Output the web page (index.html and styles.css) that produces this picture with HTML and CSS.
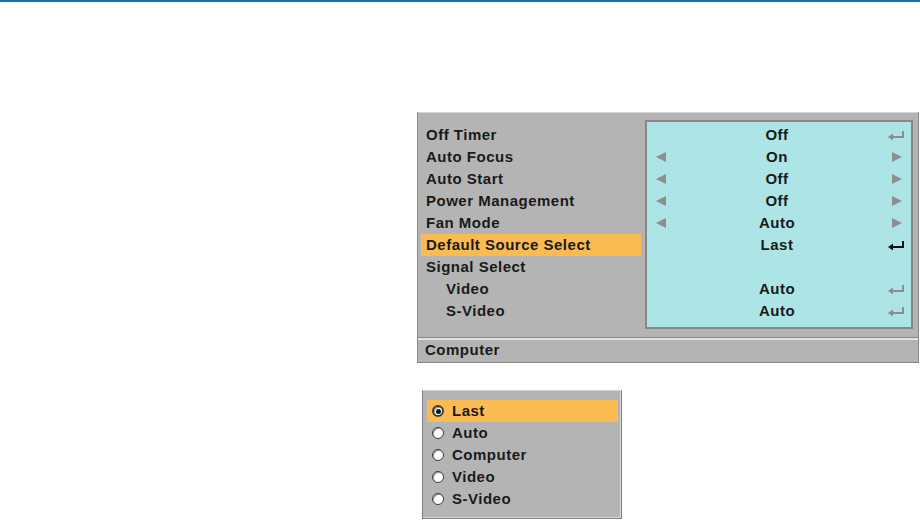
FILE: index.html
```html
<!DOCTYPE html>
<html>
	<head>
		<meta charset="UTF-8">
		<title>Default Source Select</title>
		<link rel="stylesheet" href="styles.css">
	</head>
	<body>
		<div class="topline"></div>
		<div class="page">
			<div class="panel">
				<div class="upper">
					<ul class="menu">
						<li>Off Timer</li>
						<li>Auto Focus</li>
						<li>Auto Start</li>
						<li>Power Management</li>
						<li>Fan Mode</li>
						<li class="active">Default Source Select</li>
						<li>Signal Select</li>
						<li class="sub">Video</li>
						<li class="sub">S-Video</li>
					</ul>
					<div class="values">
						<div class="row"><span></span><span class="val">Off</span><span><svg class="enter" viewBox="0 0 16 9"><path d="M15 0V6H4" fill="none" stroke="#8c8c8c" stroke-width="2"/><path d="M0 6L5 2.5V9.5Z" fill="#8c8c8c"/></svg></span></div>
						<div class="row"><span class="al"></span><span class="val">On</span><span class="ar"></span></div>
						<div class="row"><span class="al"></span><span class="val">Off</span><span class="ar"></span></div>
						<div class="row"><span class="al"></span><span class="val">Off</span><span class="ar"></span></div>
						<div class="row"><span class="al"></span><span class="val">Auto</span><span class="ar"></span></div>
						<div class="row"><span></span><span class="val">Last</span><span><svg class="enter" viewBox="0 0 16 9"><path d="M15 0V6H4" fill="none" stroke="#111" stroke-width="2"/><path d="M0 6L5 2.5V9.5Z" fill="#111"/></svg></span></div>
						<div class="row"><span></span><span class="val"></span><span></span></div>
						<div class="row"><span></span><span class="val">Auto</span><span><svg class="enter" viewBox="0 0 16 9"><path d="M15 0V6H4" fill="none" stroke="#8c8c8c" stroke-width="2"/><path d="M0 6L5 2.5V9.5Z" fill="#8c8c8c"/></svg></span></div>
						<div class="row"><span></span><span class="val">Auto</span><span><svg class="enter" viewBox="0 0 16 9"><path d="M15 0V6H4" fill="none" stroke="#8c8c8c" stroke-width="2"/><path d="M0 6L5 2.5V9.5Z" fill="#8c8c8c"/></svg></span></div>
					</div>
				</div>
				<div class="status">Computer</div>
			</div>

			<div class="popup">
				<ul>
					<li class="active"><i class="radio on"></i>Last</li>
					<li><i class="radio"></i>Auto</li>
					<li><i class="radio"></i>Computer</li>
					<li><i class="radio"></i>Video</li>
					<li><i class="radio"></i>S-Video</li>
				</ul>
			</div>
		</div>
	</body>
</html>
```

FILE: styles.css
```css
* {margin: 0;padding: 0;list-style: none;box-sizing: border-box;}
body {background: #fff;font: bold 15px/22px "Liberation Sans", Arial, sans-serif;color: #1a1a1a;letter-spacing: 0.5px;}
.topline {height: 2px;background: #1b6db4;}
.page {padding: 110px 0 0 417px;}

.panel {width: 502px;background: #b4b4b4;border: 1px solid #8a8a8a;border-top-color: #d4d4d4;}
.upper {display: flex;padding: 7px 5px 8px 3px;}
.menu {width: 220px;padding-top: 4px;}
.menu li {height: 22px;padding-left: 5px;}
.menu li.sub {padding-left: 25px;}
.menu li.active {background: #f9bb52;}
.values {width: 268px;margin-left: 4px;background: #ade4e5;border: 2px solid #878787;padding: 2px 0 5px;}
.values .row {display: grid;grid-template-columns: 30px 1fr 30px;height: 22px;align-items: center;}
.values .val {text-align: center;margin-left: -4px;}
.al, .ar {width: 0;height: 0;border-top: 5px solid transparent;border-bottom: 5px solid transparent;justify-self: center;}
.al {border-right: 10px solid #8e8e8e;margin-left: -3px;}
.ar {border-left: 10px solid #8e8e8e;margin-left: 1px;}
.enter {width: 16px;height: 9px;display: block;margin-left: 7px;}

.status {height: 25px;border-top: 1px solid #8a8a8a;box-shadow: inset 0 1px 0 #e2e2e2, inset 0 2px 0 #e2e2e2;padding: 1px 0 0 7px;}

.popup {width: 200px;height: 129px;margin: 27px 0 0 5px;background: #b4b4b4;border: 1px solid #7e7e7e;border-top-color: #d4d4d4;box-shadow: inset -1px -1px 0 #d8d8d8;padding: 9px 3px 0 4px;}
.popup li {height: 22px;display: flex;align-items: center;padding-left: 5px;}
.popup li.active {background: #f9bb52;}
.radio {width: 12px;height: 12px;border-radius: 50%;background: #fff;border: 1px solid #3a3a3a;box-shadow: inset 1px 1px 0 #9a9a9a;margin-right: 8px;display: flex;align-items: center;justify-content: center;}
.radio.on {border-width: 2px;}
.radio.on::after {content: "";width: 5px;height: 5px;border-radius: 50%;background: #111;}
```
